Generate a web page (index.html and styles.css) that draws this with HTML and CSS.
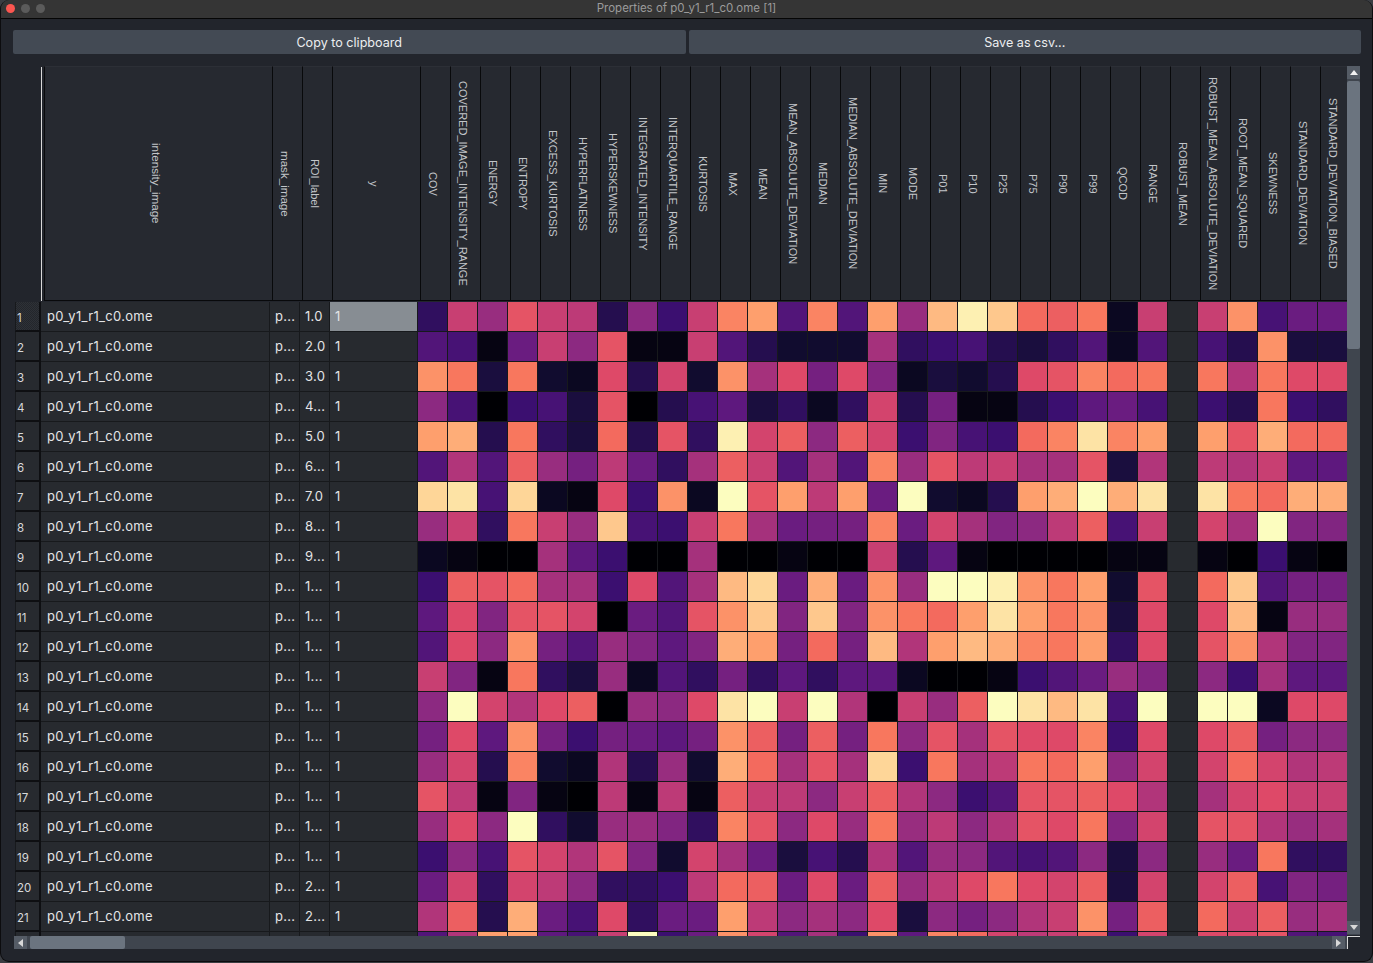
FILE: index.html
```html
<!DOCTYPE html>
<html lang="en">

<head>
  <meta charset="UTF-8">
  <meta name="viewport" content="width=device-width, initial-scale=1.0">
  <title>Properties of p0_y1_r1_c0.ome [1]</title>
  <link rel="stylesheet" href="styles.css">
  <script type="text/javascript" src="table.js"></script>
</head>

<body>
  <div class="window">
    <div class="titlebar">
      <span class="light light-close"></span>
      <span class="light"></span>
      <span class="light"></span>
      <span class="title">Properties of p0_y1_r1_c0.ome [1]</span>
    </div>

    <div class="actions">
      <button class="action">Copy to clipboard</button>
      <button class="action">Save as csv...</button>
    </div>

    <div class="table-area">
      <div class="view">
        <div id="head" class="head"></div>
        <div id="rows"></div>
      </div>

      <div class="vbar">
        <span class="arrow-btn"><i class="tri tri-up"></i></span>
        <span class="vbar-handle"></span>
        <span class="arrow-btn arrow-down"><i class="tri tri-down"></i></span>
      </div>

      <div class="hbar">
        <span class="arrow-btn"><i class="tri tri-left"></i></span>
        <span class="hbar-handle"></span>
        <span class="arrow-btn arrow-right"><i class="tri tri-right"></i></span>
      </div>

      <div class="corner"></div>
    </div>
  </div>
</body>

</html>
```

FILE: styles.css
```css
* {
  padding: 0;
  margin: 0;
  box-sizing: border-box;
}

body {
  width: 1373px;
  height: 963px;
  overflow: hidden;
  background-color: #3a3d42;
  font-family: "Inter", "Liberation Sans", sans-serif;
}

.window {
  height: 962px;
  background-color: #22252c;
  border: 1px solid #0c0c0e;
  border-top: 0;
  border-radius: 9px;
  overflow: hidden;
}

/* title bar */
.titlebar {
  display: flex;
  align-items: center;
  gap: 6px;
  height: 19px;
  padding: 0 0 1px 5px;
  background-color: #353535;
  border-bottom: 1px solid #050505;
  position: relative;
}

.light {
  width: 9px;
  height: 9px;
  border-radius: 50%;
  background-color: #5b5b5b;
}

.light-close {
  background-color: #fc5650;
}

.title {
  position: absolute;
  left: 0;
  right: 0;
  top: 2px;
  text-align: center;
  font-size: 11.5px;
  line-height: 13px;
  color: #9b9b9b;
}

/* buttons */
.actions {
  display: flex;
  gap: 3px;
  margin: 11px 11px 12px 12px;
}

.action {
  flex: 1;
  height: 24px;
  border: 0;
  border-radius: 2px;
  background-color: #434a54;
  color: #eceef0;
  font-family: inherit;
  font-size: 12.6px;
}

/* table */
.table-area {
  display: grid;
  grid-template-columns: 1333px 13px;
  grid-template-rows: 870px 13px;
  margin-left: 13px;
}

.view {
  overflow: hidden;
}

.head {
  display: flex;
  height: 235px;
  margin-bottom: 1px;
}

.head-corner {
  flex: none;
  width: 28px;
  margin: 1px 2px 0 0;
  border-right: 1px solid #d8d8d8;
}

.head-cell {
  flex: none;
  display: flex;
  align-items: center;
  justify-content: center;
  width: 30px;
  padding-right: 5px;
  background-color: #262930;
  border-top: 1px solid #2c2f36;
  border-left: 1px solid #08090b;
  border-bottom: 1px solid #08090b;
  color: #c3c6ca;
  font-family: "Liberation Sans", sans-serif;
  font-size: 11px;
  writing-mode: vertical-rl;
  white-space: nowrap;
}

.head-image {
  width: 228px;
}

.head-y {
  width: 88px;
}

/* lower case labels run a little wider in the original */
.head-lower {
  font-size: 11.6px;
}

.row {
  display: flex;
  height: 30px;
}

.cell {
  flex: none;
  width: 30px;
  padding-left: 5px;
  border-right: 1px solid #17191c;
  border-bottom: 1px solid #17191c;
  background-color: #272a2f;
  color: #e4e5e7;
  font-size: 13px;
  letter-spacing: .3px;
  line-height: 29px;
  white-space: nowrap;
  overflow: hidden;
}

.row-num {
  width: 26px;
  padding-left: 1px;
  margin-left: 1px;
  border-right: 2px solid #0e0f12;
  border-bottom: 2px solid #0e0f12;
  border-left: 1px solid #17191c;
  background-color: #272a2f;
  color: #d8d9db;
  font-size: 11.5px;
  line-height: 32px;
  flex: none;
}

.row-first .row-num {
  background-image: repeating-conic-gradient(#2e3137 0 25%, #23262b 0 50%);
  background-size: 2px 2px;
}

.col-image {
  width: 229px;
  padding-left: 6px;
}

.col-y {
  width: 88px;
}

.row-first .col-y {
  background-color: #878d93;
}

.heat {
  padding: 0;
}

/* scrollbars */
.vbar,
.hbar {
  display: flex;
  background-color: #3f454e;
}

.vbar {
  flex-direction: column;
  height: 869px;
}

.arrow-btn {
  flex: none;
  display: flex;
  align-items: center;
  justify-content: center;
  width: 13px;
  height: 13px;
  background-color: #555c66;
}

.arrow-down {
  margin-top: auto;
  margin-bottom: 1px;
}

.arrow-right {
  margin-left: auto;
  margin-right: 2px;
}

.vbar-handle {
  height: 268px;
  margin-top: 2px;
  background-color: #6b747f;
  border-radius: 2px;
}

.hbar-handle {
  width: 95px;
  margin-left: 3px;
  background-color: #6b747f;
  border-radius: 2px;
}

.tri {
  width: 0;
  height: 0;
  border-style: solid;
  border-color: transparent;
}

.tri-up {
  border-width: 0 4px 5px;
  border-bottom-color: #f2f2f2;
}

.tri-down {
  border-width: 5px 4px 0;
  border-top-color: #d8d8d8;
}

.tri-left {
  border-width: 4px 5px 4px 0;
  border-right-color: #d8d8d8;
}

.tri-right {
  border-width: 4px 0 4px 5px;
  border-left-color: #d8d8d8;
}

.corner {
  border-top: 1px solid #d8d8d8;
  border-left: 1px solid #d8d8d8;
}
```

FILE: table.js
```js
window.onload = function () {

  const columns = [
    "COV", "COVERED_IMAGE_INTENSITY_RANGE", "ENERGY", "ENTROPY", "EXCESS_KURTOSIS",
    "HYPERFLATNESS", "HYPERSKEWNESS", "INTEGRATED_INTENSITY", "INTERQUARTILE_RANGE",
    "KURTOSIS", "MAX", "MEAN", "MEAN_ABSOLUTE_DEVIATION", "MEDIAN",
    "MEDIAN_ABSOLUTE_DEVIATION", "MIN", "MODE", "P01", "P10", "P25", "P75", "P90", "P99",
    "QCOD", "RANGE", "ROBUST_MEAN", "ROBUST_MEAN_ABSOLUTE_DEVIATION", "ROOT_MEAN_SQUARED",
    "SKEWNESS", "STANDARD_DEVIATION", "STANDARD_DEVIATION_BIASED"
  ];

  // one char per cell, 0-z is the position on the colour scale, . is an empty cell
  // the last row only shows its top edge above the scrollbar, so it has no text
  const heat = [
    "6jfmji5e7jqs9q9sfuyvonp2j.jr8bb",
    "981bjem11j95333g678546929.85r44",
    "rp4p32l5k3rglcld2435lmqop.phpll",
    "e80784m058a4626k5c1157ab8.75p76",
    "st5p64o5m6yknenk7d87oqxqs.smtoo",
    "9h9nfcib6gnj9g9qfmijggm4h.ihjaa",
    "wx8w21l7r2zmsisbz325stztx.xpott",
    "fj6pjfv87jpgbccqbkgdein8j.kgzdd",
    "2100ga700g00100j5a1000011.10710",
    "7nmogg7l9guwbtbrfzzyrps3m.ov9cc",
    "aldmmk0b9mrvdvdrposxspr4l.lu1ff",
    "9lerc9fdadtscocuhsutqps6l.mrhdd",
    "jd1p64f296c6a6aa200179bfd.e7gaa",
    "ezkhln0felxzjzh0jfnzxux8z.zz2ll",
    "clarc7cbacrncncpemgmllq7l.lncee",
    "fk5q32h5f3togmgw7pgiposek.kokhi",
    "mi1d10i1i1njiejnhe79mmnlh.gkljj",
    "flez63ffd6qmelfpfiehmlpdk.mmhfg",
    "7e8mkhmd3kgb485h9fe989e4e.fbp66",
    "bk6kie667ionblbnfilplkn4k.kn8dc",
    "hn5tb8l6bbsiegel4ecehjrcn.ojnfg",
    "9hssa8jz7brk9g7raqokijn7k.llm98"
  ];

  const labels = [
    "1.0", "2.0", "3.0", "4...", "5.0", "6...", "7.0", "8...", "9...", "1...", "1...",
    "1...", "1...", "1...", "1...", "1...", "1...", "1...", "1...", "2...", "2..."
  ];

  // magma
  const stops = [
    [0, 0, 4], [20, 14, 54], [59, 15, 112], [100, 26, 128], [140, 41, 129], [183, 55, 121],
    [222, 73, 104], [247, 112, 92], [254, 159, 109], [254, 207, 146], [252, 253, 191]
  ];

  function heatColor(ch) {
    const t = parseInt(ch, 36) / 35 * 10;
    const i = Math.min(Math.floor(t), 9);
    const f = t - i;
    const c = stops[i].map(function (v, k) {
      return Math.round(v + (stops[i + 1][k] - v) * f);
    });
    return "rgb(" + c.join(",") + ")";
  }

  function addDiv(parent, cls, text) {
    const el = document.createElement("div");
    el.className = cls;
    if (text) {
      el.textContent = text;
    }
    parent.appendChild(el);
    return el;
  }

  // header
  const head = document.getElementById("head");
  addDiv(head, "head-corner");
  addDiv(head, "head-cell head-image head-lower", "intensity_image");
  addDiv(head, "head-cell head-lower", "mask_image");
  addDiv(head, "head-cell", "ROI_label");
  addDiv(head, "head-cell head-y", "y");
  for (let i = 0; i < columns.length; i++) {
    addDiv(head, "head-cell", columns[i]);
  }

  // rows
  const rows = document.getElementById("rows");
  for (let r = 0; r < heat.length; r++) {
    const shown = r < labels.length;
    const row = addDiv(rows, r === 0 ? "row row-first" : "row");
    addDiv(row, "row-num", shown ? String(r + 1) : "");
    addDiv(row, "cell col-image", shown ? "p0_y1_r1_c0.ome" : "");
    addDiv(row, "cell", shown ? "p..." : "");
    addDiv(row, "cell", shown ? labels[r] : "");
    addDiv(row, "cell col-y", shown ? "1" : "");
    for (let c = 0; c < heat[r].length; c++) {
      const cell = addDiv(row, "cell heat");
      if (heat[r][c] !== ".") {
        cell.style.backgroundColor = heatColor(heat[r][c]);
      }
    }
  }

}
```
